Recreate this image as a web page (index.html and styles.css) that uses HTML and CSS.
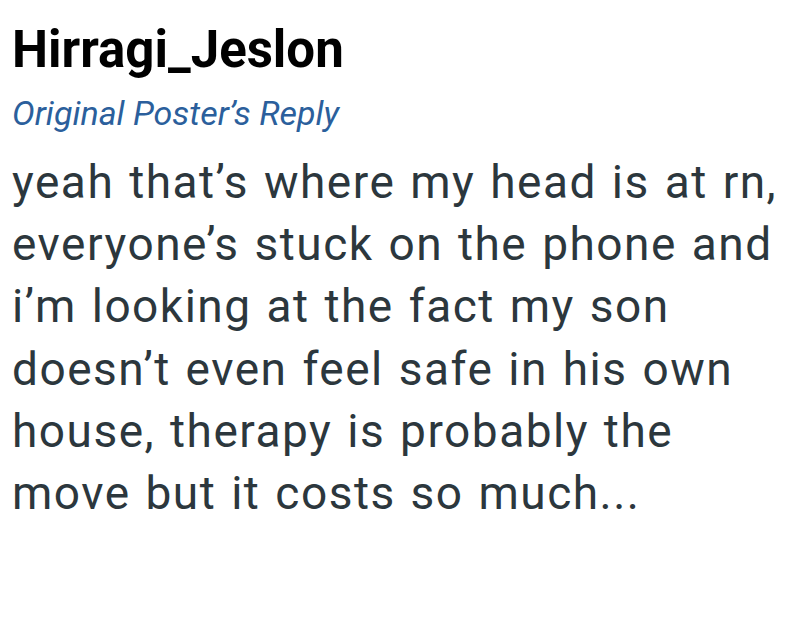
FILE: index.html
```html
<!DOCTYPE html>
<html>
<head>
<meta charset="utf-8">
<link rel="stylesheet" href="styles.css">
</head>
<body>
<div class="post">
  <h1 class="author">Hirragi_Jeslon</h1>
  <div class="tag">Original Poster’s Reply</div>
  <p class="body">yeah that’s where my head is at rn, everyone’s stuck on the phone and i’m looking at the fact my son doesn’t even feel safe in his own house, therapy is probably the move but it costs so much...</p>
</div>
</body>
</html>
```
FILE: styles.css
```css
html, body {
  margin: 0;
  padding: 0;
  background: #ffffff;
}
.post {
  padding: 18px 12px 0 12px;
  font-family: Roboto, "Noto Sans", sans-serif;
}
.author {
  margin: 0;
  font-size: 51px;
  font-weight: 700;
  line-height: 64px;
  color: #000000;
}
.tag {
  margin-top: 11px;
  font-size: 34px;
  font-style: italic;
  line-height: 40px;
  color: #2b5f9c;
}
.body {
  margin: 18px 0 0 0;
  width: 776px;
  font-size: 46px;
  line-height: 62.2px;
  letter-spacing: 1.5px;
  word-spacing: 2px;
  color: #2c373d;
}
```
